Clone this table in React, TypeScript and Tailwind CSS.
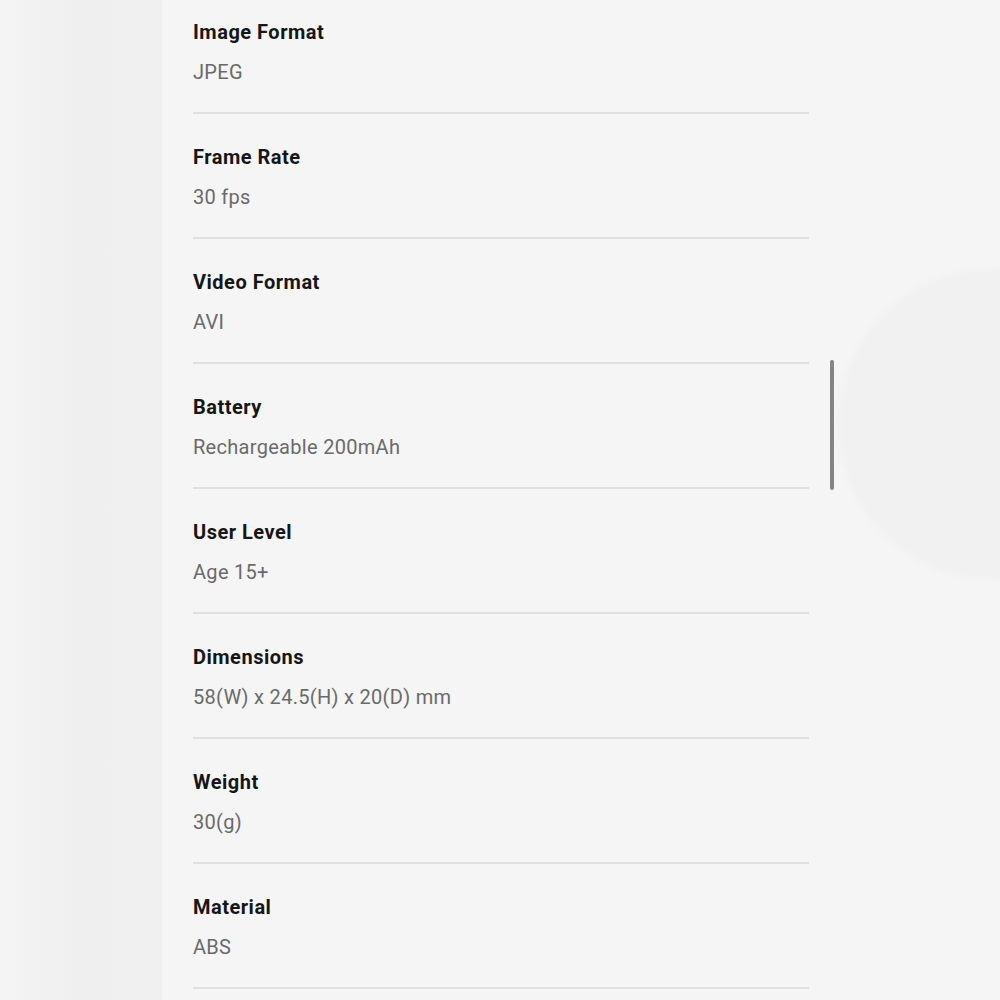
import React from "react";

const specs = [
  { label: "Image Format", value: "JPEG" },
  { label: "Frame Rate", value: "30 fps" },
  { label: "Video Format", value: "AVI" },
  { label: "Battery", value: "Rechargeable 200mAh" },
  { label: "User Level", value: "Age 15+" },
  { label: "Dimensions", value: "58(W) x 24.5(H) x 20(D) mm" },
  { label: "Weight", value: "30(g)" },
  { label: "Material", value: "ABS" },
];

export default function App() {
  return (
    <div className="relative flex h-[1000px] w-[1000px] overflow-hidden bg-[#f4f4f4] font-['Roboto',sans-serif]">
      {/* Left shaded gutter */}
      <div className="w-[162px] shrink-0 bg-gradient-to-r from-[#f4f4f4] via-[#efefef] to-[#f0f0f0]" />

      {/* Spec list */}
      <div className="relative flex-1 bg-[#f5f5f5]">
        <div className="absolute right-[-150px] top-[268px] h-[312px] w-[312px] rounded-full bg-[#f1f1f1] blur-[2px]" />
        <div className="relative -mt-[11px] flex pl-[31px]">
          <div className="w-[616px]">
            {specs.map((s) => (
              <div key={s.label} className="border-b-2 border-[#e0e0e0] pt-[29px] pb-[26px]">
                <div className="text-[20px] leading-[28px] font-bold tracking-[0.5px] text-[#161616]">
                  {s.label}
                </div>
                <div className="mt-[12px] text-[20px] leading-[28px] tracking-[0.3px] text-[#6a6a6a]">
                  {s.value}
                </div>
              </div>
            ))}
          </div>
        </div>
        {/* Scrollbar */}
        <div className="absolute left-[668px] top-[360px] h-[130px] w-[4px] rounded-full bg-[#858585]" />
      </div>
    </div>
  );
}
